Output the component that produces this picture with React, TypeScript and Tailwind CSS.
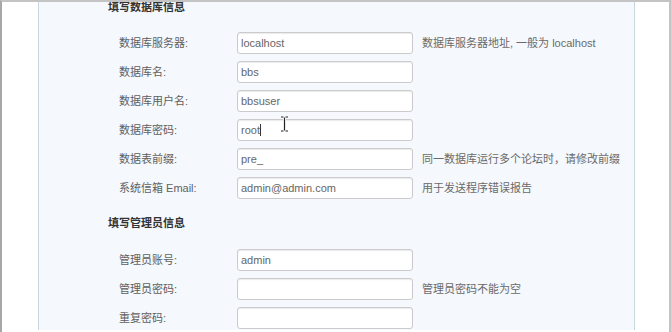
import React from 'react';

const dbRows = [
  { label: '数据库服务器:', value: 'localhost', hint: '数据库服务器地址, 一般为 localhost' },
  { label: '数据库名:', value: 'bbs', hint: '' },
  { label: '数据库用户名:', value: 'bbsuser', hint: '' },
  { label: '数据库密码:', value: 'root', hint: '', caret: true },
  { label: '数据表前缀:', value: 'pre_', hint: '同一数据库运行多个论坛时，请修改前缀' },
  { label: '系统信箱 Email:', value: 'admin@admin.com', hint: '用于发送程序错误报告' },
];

const adminRows = [
  { label: '管理员账号:', value: 'admin', hint: '' },
  { label: '管理员密码:', value: '', hint: '管理员密码不能为空' },
  { label: '重复密码:', value: '', hint: '' },
];

type Row = { label: string; value: string; hint: string; caret?: boolean };

function FormRow({ row }: { row: Row }) {
  return (
    <div className="flex items-center h-[22px]">
      <div className="w-[118px] pl-[80px] text-[11px] text-[#606060] whitespace-nowrap">{row.label}</div>
      <div className="ml-[80px] w-[176px] h-[22px] bg-white border border-[#cbcbcb] rounded-[3px] shadow-[inset_0_1px_1px_rgba(0,0,0,0.08)] flex items-center pl-[3px] text-[11px] text-[#666]">
        <span>{row.value}</span>
        {row.caret && <span className="w-px h-[12px] bg-[#333]" />}
      </div>
      {row.hint && <div className="ml-[9px] text-[11px] text-[#6a6a6a] whitespace-nowrap">{row.hint}</div>}
    </div>
  );
}

export default function App() {
  return (
    <div
      className="w-[671px] h-[332px] overflow-hidden bg-white border-t-2 border-t-[#c4c4c4] border-l-2 border-l-[#a8a8a8] border-r-2 border-r-[#c4c4c4] relative"
      style={{ fontFamily: '"Liberation Sans", "Noto Sans CJK SC", sans-serif' }}
    >
      <div className="ml-[36px] w-[597px] h-full bg-[#f5f8fc] border-l border-r border-[#c9d7df]">
        <div className="pl-[69px] -mt-[2px] text-[11px] font-bold text-[#333] leading-[14px]">填写数据库信息</div>
        <div className="mt-[18px] flex flex-col gap-[7px]">
          {dbRows.map((r) => (
            <FormRow key={r.label} row={r} />
          ))}
        </div>
        <div className="pl-[69px] mt-[17px] text-[11px] font-bold text-[#333] leading-[14px]">填写管理员信息</div>
        <div className="mt-[19px] flex flex-col gap-[7px]">
          {adminRows.map((r) => (
            <FormRow key={r.label} row={r} />
          ))}
        </div>
      </div>
      <svg className="absolute left-[278px] top-[114px]" width="9" height="16" viewBox="0 0 9 16">
        <path d="M1 1h2.5M5.5 1H8M4.5 1.5v13M1 15h2.5M5.5 15H8" stroke="#fff" strokeWidth="3" fill="none" />
        <path d="M1 1h2.5M5.5 1H8M4.5 1.5v13M1 15h2.5M5.5 15H8" stroke="#222" strokeWidth="1.2" fill="none" />
      </svg>
    </div>
  );
}
